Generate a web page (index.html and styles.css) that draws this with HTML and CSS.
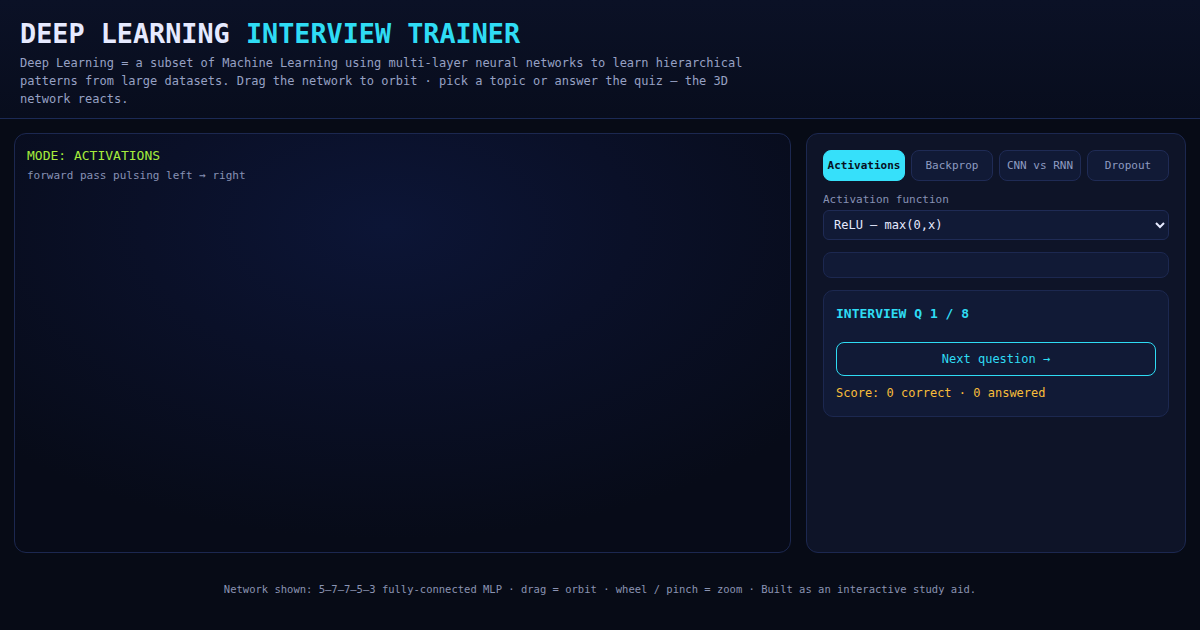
FILE: index.html
```html
<!DOCTYPE html>
<html lang="en">
<head>
    <meta charset="UTF-8">
    <meta name="viewport" content="width=device-width, initial-scale=1.0">
    <title>Deep Learning Interview Trainer</title>
    <link rel="stylesheet" href="styles.css">
</head>
<body>

<header class="top">
    <h1>DEEP LEARNING <span class="accent">INTERVIEW TRAINER</span></h1>
    <p class="intro">Deep Learning = a subset of Machine Learning using multi-layer neural networks to learn hierarchical patterns from large datasets. Drag the network to orbit · pick a topic or answer the quiz — the 3D network reacts.</p>
</header>

<main class="layout">
    <section class="stage">
        <div class="mode">MODE: ACTIVATIONS</div>
        <div class="mode-note">forward pass pulsing left → right</div>
    </section>

    <aside class="side">
        <div class="tabs">
            <button class="tab active">Activations</button>
            <button class="tab">Backprop</button>
            <button class="tab">CNN vs RNN</button>
            <button class="tab">Dropout</button>
        </div>

        <label class="field-label" for="act">Activation function</label>
        <select id="act" class="picker">
            <option>ReLU — max(0,x)</option>
            <option>Sigmoid — 1/(1+e^-x)</option>
            <option>Tanh</option>
            <option>Leaky ReLU</option>
        </select>

        <div class="info-box"></div>

        <div class="quiz">
            <div class="quiz-title">INTERVIEW Q 1 / 8</div>
            <button class="next-btn">Next question →</button>
            <div class="score">Score: 0 correct · 0 answered</div>
        </div>
    </aside>
</main>

<footer class="foot">
    Network shown: 5–7–7–5–3 fully-connected MLP · drag = orbit · wheel / pinch = zoom · Built as an interactive study aid.
</footer>

</body>
</html>
```

FILE: styles.css
```css
* {
    box-sizing: border-box;
}

body {
    margin: 0;
    background-color: #070b16;
    color: #c9d1ec;
    font-family: "DejaVu Sans Mono", "Liberation Mono", monospace;
}

.top {
    padding: 18px 20px 10px;
    background: linear-gradient(180deg, #0b1126 0%, #080d1d 100%);
    border-bottom: 1px solid #1c2a55;
}

.top h1 {
    margin: 0 0 4px;
    font-size: 26.8px;
    line-height: 32px;
    font-weight: bold;
    color: #e6eaff;
}

.top .accent {
    color: #2fdcf4;
}

.intro {
    margin: 0;
    max-width: 740px;
    font-size: 12px;
    line-height: 18px;
    color: #97a1c4;
}

.layout {
    display: grid;
    grid-template-columns: 1fr 380px;
    gap: 15px;
    padding: 14px;
}

.stage {
    height: 420px;
    padding: 12px;
    border: 1px solid #1c2850;
    border-radius: 12px;
    background: radial-gradient(ellipse 70% 75% at 48% 22%, #0c1536 0%, #0a1028 45%, #070b18 100%);
}

.mode {
    font-size: 13px;
    line-height: 20px;
    color: #a6ec3c;
}

.mode-note {
    margin-top: 2px;
    font-size: 11px;
    line-height: 16px;
    color: #8791b4;
}

.side {
    height: 420px;
    padding: 16px;
    border: 1px solid #1c2850;
    border-radius: 12px;
    background-color: #0e1428;
    display: flex;
    flex-direction: column;
}

.tabs {
    display: grid;
    grid-template-columns: repeat(4, 1fr);
    gap: 6px;
}

.tab {
    height: 31px;
    padding: 0;
    font-family: inherit;
    font-size: 11px;
    color: #8e9ac0;
    background-color: #111a36;
    border: 1px solid #1f2b55;
    border-radius: 8px;
    cursor: pointer;
}

.tab.active {
    background-color: #36e0fa;
    border-color: #36e0fa;
    color: #07101f;
    font-weight: bold;
}

.field-label {
    margin-top: 12px;
    font-size: 11px;
    line-height: 14px;
    color: #8791b4;
}

.picker {
    margin-top: 3px;
    height: 30px;
    padding: 0 6px;
    font-family: inherit;
    font-size: 12px;
    color: #e6eaff;
    background-color: #111a36;
    border: 1px solid #1f2b55;
    border-radius: 6px;
    color-scheme: dark;
}

.info-box {
    margin-top: 12px;
    height: 26px;
    background-color: #111a36;
    border: 1px solid #1c2850;
    border-radius: 8px;
}

.quiz {
    margin-top: 12px;
    padding: 12px 12px 15px;
    background-color: #111a36;
    border: 1px solid #1c2850;
    border-radius: 10px;
}

.quiz-title {
    font-size: 13px;
    line-height: 22px;
    font-weight: bold;
    color: #2fdcf4;
}

.next-btn {
    display: block;
    width: 100%;
    height: 34px;
    margin-top: 17px;
    font-family: inherit;
    font-size: 12px;
    color: #2fdcf4;
    background-color: transparent;
    border: 1px solid #2fdcf4;
    border-radius: 8px;
    cursor: pointer;
}

.score {
    margin-top: 9px;
    font-size: 12px;
    line-height: 16px;
    color: #f8bd3a;
}

.foot {
    padding: 14px 0 0;
    text-align: center;
    font-size: 10.5px;
    line-height: 16px;
    color: #8a93b2;
}
```
